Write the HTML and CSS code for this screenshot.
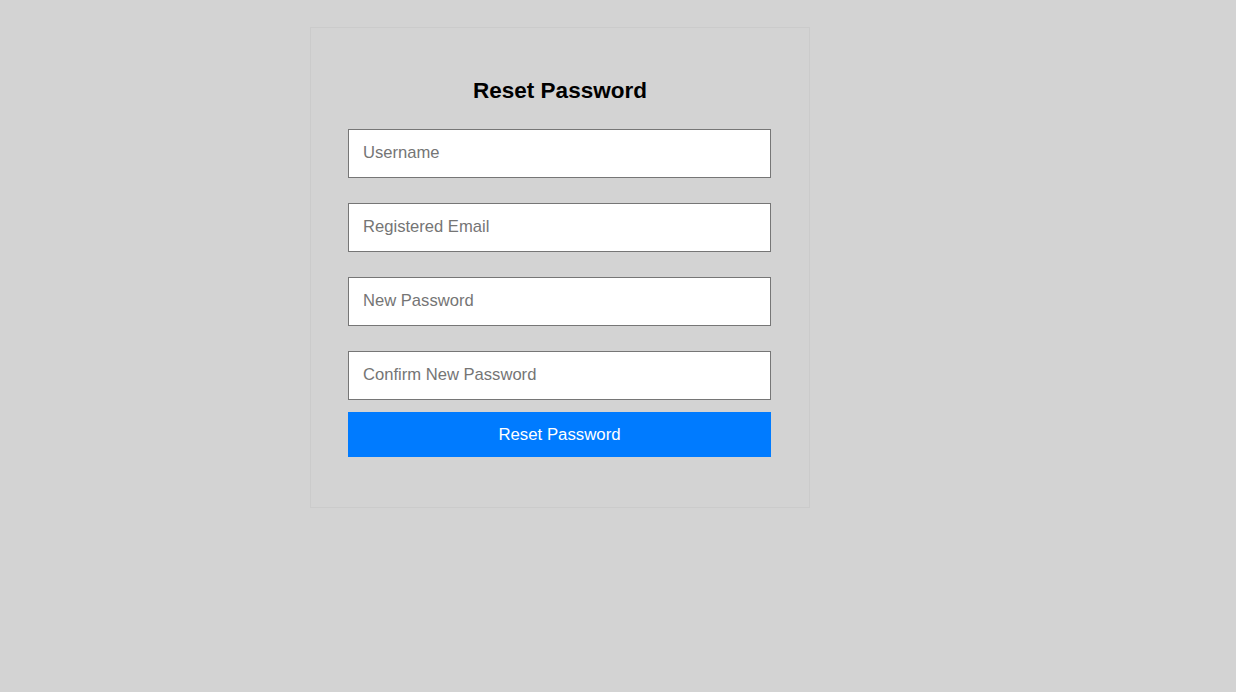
FILE: index.html
```html
<!DOCTYPE html>
<html lang="en">
<head>
<meta charset="utf-8">
<title>Reset Password</title>
<link rel="stylesheet" href="styles.css">
</head>
<body>
  <div class="card">
    <h2 class="title">Reset Password</h2>
    <form class="form">
      <input class="field" type="text" placeholder="Username">
      <input class="field" type="email" placeholder="Registered Email">
      <input class="field" type="password" placeholder="New Password">
      <input class="field last" type="password" placeholder="Confirm New Password">
      <button class="btn" type="button">Reset Password</button>
    </form>
  </div>
</body>
</html>
```

FILE: styles.css
```css
html, body {
  margin: 0;
  padding: 0;
}
body {
  background: #d3d3d3;
  font-family: "Liberation Sans", Arial, sans-serif;
  padding: 27px 0 0 310px;
  min-height: 692px;
  box-sizing: border-box;
}
.card {
  width: 500px;
  height: 481px;
  box-sizing: border-box;
  border: 1px solid #cbcbcb;
  padding: 50px 0 0;
}
.title {
  margin: 0 0 26px;
  text-align: center;
  font-size: 22.5px;
  line-height: 25px;
  font-weight: bold;
  color: #000;
}
.form {
  width: 423px;
  margin: 0 0 0 37px;
  display: flex;
  flex-direction: column;
}
.field {
  height: 49px;
  box-sizing: border-box;
  border: 1px solid #767676;
  background: #fff;
  padding: 0 14px 2px;
  font-family: "Liberation Sans", Arial, sans-serif;
  font-size: 16.6px;
  margin: 0 0 25px;
  outline: none;
}
.field.last {
  margin-bottom: 12px;
}
.field::placeholder {
  color: #757575;
}
.btn {
  height: 45px;
  border: none;
  background: #007bff;
  color: #fff;
  font-family: "Liberation Sans", Arial, sans-serif;
  font-size: 16.8px;
  padding: 0;
  cursor: pointer;
}
```
